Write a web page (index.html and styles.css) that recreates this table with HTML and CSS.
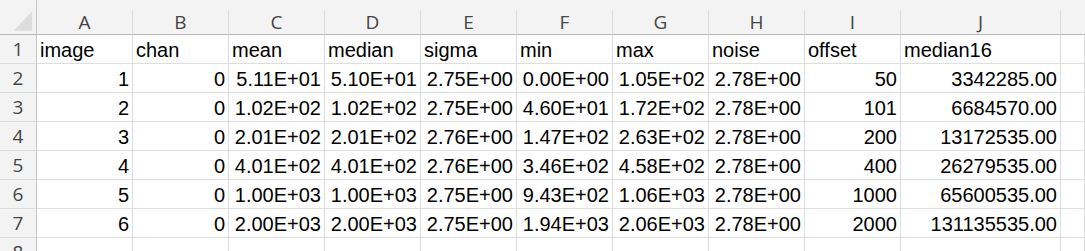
FILE: index.html
```html
<!DOCTYPE html>
<html lang="en">
<head>
<meta charset="utf-8">
<title>Sheet</title>
<link rel="stylesheet" href="styles.css">
</head>
<body>
<div class="sheet">
  <div class="corner">
    <svg class="corner-tri" width="37" height="35" viewBox="0 0 37 35"><polygon points="33,11 33,31 14,31" fill="#dcdcdc"/></svg>
  </div>
  <div class="strip"></div>

  <div class="ch">A</div><div class="ch">B</div><div class="ch">C</div><div class="ch">D</div><div class="ch">E</div><div class="ch">F</div><div class="ch">G</div><div class="ch">H</div><div class="ch">I</div><div class="ch">J</div><div class="ch ch-last"></div>

  <div class="rh">1</div>
  <div class="c">image</div><div class="c">chan</div><div class="c">mean</div><div class="c">median</div><div class="c">sigma</div><div class="c">min</div><div class="c">max</div><div class="c">noise</div><div class="c">offset</div><div class="c">median16</div><div class="c"></div>

  <div class="rh">2</div>
  <div class="c n">1</div><div class="c n">0</div><div class="c n">5.11E+01</div><div class="c n">5.10E+01</div><div class="c n">2.75E+00</div><div class="c n">0.00E+00</div><div class="c n">1.05E+02</div><div class="c n">2.78E+00</div><div class="c n">50</div><div class="c n">3342285.00</div><div class="c"></div>

  <div class="rh">3</div>
  <div class="c n">2</div><div class="c n">0</div><div class="c n">1.02E+02</div><div class="c n">1.02E+02</div><div class="c n">2.75E+00</div><div class="c n">4.60E+01</div><div class="c n">1.72E+02</div><div class="c n">2.78E+00</div><div class="c n">101</div><div class="c n">6684570.00</div><div class="c"></div>

  <div class="rh">4</div>
  <div class="c n">3</div><div class="c n">0</div><div class="c n">2.01E+02</div><div class="c n">2.01E+02</div><div class="c n">2.76E+00</div><div class="c n">1.47E+02</div><div class="c n">2.63E+02</div><div class="c n">2.78E+00</div><div class="c n">200</div><div class="c n">13172535.00</div><div class="c"></div>

  <div class="rh">5</div>
  <div class="c n">4</div><div class="c n">0</div><div class="c n">4.01E+02</div><div class="c n">4.01E+02</div><div class="c n">2.76E+00</div><div class="c n">3.46E+02</div><div class="c n">4.58E+02</div><div class="c n">2.78E+00</div><div class="c n">400</div><div class="c n">26279535.00</div><div class="c"></div>

  <div class="rh">6</div>
  <div class="c n">5</div><div class="c n">0</div><div class="c n">1.00E+03</div><div class="c n">1.00E+03</div><div class="c n">2.75E+00</div><div class="c n">9.43E+02</div><div class="c n">1.06E+03</div><div class="c n">2.78E+00</div><div class="c n">1000</div><div class="c n">65600535.00</div><div class="c"></div>

  <div class="rh">7</div>
  <div class="c n">6</div><div class="c n">0</div><div class="c n">2.00E+03</div><div class="c n">2.00E+03</div><div class="c n">2.75E+00</div><div class="c n">1.94E+03</div><div class="c n">2.06E+03</div><div class="c n">2.78E+00</div><div class="c n">2000</div><div class="c n">131135535.00</div><div class="c"></div>

  <div class="rh">8</div>
  <div class="c"></div><div class="c"></div><div class="c"></div><div class="c"></div><div class="c"></div><div class="c"></div><div class="c"></div><div class="c"></div><div class="c"></div><div class="c"></div><div class="c"></div>
</div>
</body>
</html>
```
FILE: styles.css
```css
* { box-sizing: border-box; }
html, body {
  margin: 0;
  padding: 0;
  background: #ffffff;
  overflow: hidden;
}
.sheet {
  display: grid;
  grid-template-columns: 37px repeat(9, 96px) 160px 1fr;
  grid-template-rows: 10px 25px;
  grid-auto-rows: 29px;
  width: 1085px;
}
.corner {
  grid-row: 1 / 3;
  grid-column: 1;
  background: #f3f3f3;
  border-right: 1px solid #c4c4c4;
  border-bottom: 1px solid #b8b8b8;
  display: flex;
}
.corner-tri { display: block; }
.strip {
  grid-row: 1;
  grid-column: 2 / -1;
  background: #f3f3f3;
}
.ch {
  background: #f3f3f3;
  border-right: 1px solid #dcdcdc;
  border-bottom: 1px solid #b8b8b8;
  font-family: "Open Sans", "Noto Sans", sans-serif;
  font-size: 19px;
  line-height: 24px;
  color: #454545;
  text-align: center;
}
.ch-last { border-right: none; }
.rh {
  background: #f3f3f3;
  border-right: 1px solid #c4c4c4;
  border-bottom: 1px solid #dcdcdc;
  font-family: "Open Sans", "Noto Sans", sans-serif;
  font-size: 19px;
  line-height: 24px;
  color: #454545;
  display: flex;
  align-items: flex-end;
  justify-content: center;
  padding-bottom: 2px;
}
.c {
  border-right: 1px solid #dedede;
  border-bottom: 1px solid #dedede;
  font-family: "Liberation Sans", Arial, sans-serif;
  font-size: 20px;
  line-height: 23px;
  color: #000000;
  display: flex;
  align-items: flex-end;
  justify-content: flex-start;
  padding: 0 3px 1px 3px;
  white-space: nowrap;
  overflow: hidden;
}
.c.n { justify-content: flex-end; }
```
